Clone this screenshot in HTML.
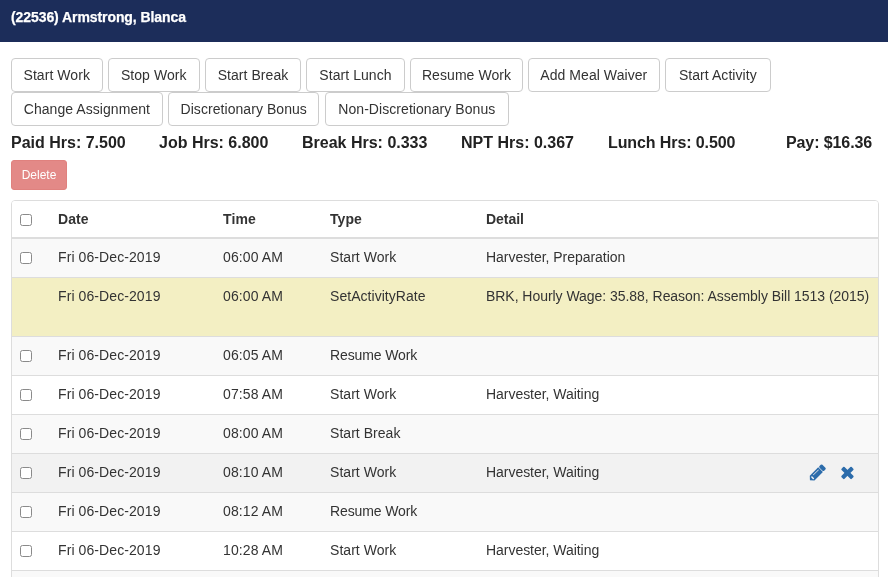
<!DOCTYPE html>
<html>
<head>
<meta charset="utf-8">
<title>Timecard</title>
<style>
*{box-sizing:border-box}
html,body{margin:0;padding:0}
body{width:888px;height:577px;overflow:hidden;background:#fff;font-family:"Liberation Sans",Arial,sans-serif;font-size:14px;line-height:20px;color:#333}
#wrap{position:absolute;left:0;top:0;width:888px;height:577px;overflow:hidden;will-change:transform;opacity:0.999}
.hdr{letter-spacing:-0.08px;-webkit-text-stroke:0.25px #fff;height:42px;background:#1c2d5a;color:#fff;font-weight:bold;font-size:14px;padding:7px 11px 0 11px;line-height:20px}
.btn{position:absolute;text-align:center;letter-spacing:0.06px;height:34px;border:1px solid #ccc;border-radius:4px;background:#fff;color:#333;font-size:14px;line-height:20px;padding:6px 0;white-space:nowrap}
.stats{position:absolute;left:11px;top:132px;width:861px;font-weight:bold;font-size:16px;line-height:22px;color:#222;white-space:nowrap}
.stats span{position:absolute;top:0}
.del{position:absolute;left:11px;top:160px;width:56px;height:30px;border-radius:3px;background:#e38987;border:1px solid #e0817e;color:#fff;font-size:12px;line-height:18px;padding:5px 0;text-align:center}
.tbl{position:absolute;left:11px;top:200px;width:868px;height:400px;border:1px solid #ddd;border-radius:4px;overflow:hidden}
.row{position:relative;height:39px;border-top:1px solid #ddd;background:#fff}
.row.odd{background:#f9f9f9}
.row.head{height:38px;border-top:0;border-bottom:2px solid #ddd;font-weight:bold;background:#fff}
.row.hl{height:59px;background:#f3efc3}
.row.hov{background:#f2f2f2}
.row.first{border-top:0;height:38px}
.row.first .cb{top:13px}
.row span{position:absolute;top:8px;white-space:nowrap}
.c1{left:46px;letter-spacing:0.09px}.c2{left:211px;letter-spacing:0.12px}.c3{left:318px;letter-spacing:0.04px}.c4{left:474px;letter-spacing:-0.04px}
.cb{position:absolute;left:8px;top:13px;width:12px;height:12px;border:1px solid #8a8a8a;border-radius:2.5px;background:#fff}
.ico{position:absolute;top:10px}
</style>
</head>
<body>
<div id="wrap">
<div class="hdr">(22536) Armstrong, Blanca</div>
<div class="btn" style="left:11px;top:58px;width:91.5px">Start Work</div>
<div class="btn" style="left:108px;top:58px;width:91.5px">Stop Work</div>
<div class="btn" style="left:205px;top:58px;width:96px">Start Break</div>
<div class="btn" style="left:306px;top:58px;width:99px">Start Lunch</div>
<div class="btn" style="left:410px;top:58px;width:113px">Resume Work</div>
<div class="btn" style="left:528px;top:58px;width:131.6px">Add Meal Waiver</div>
<div class="btn" style="left:665px;top:58px;width:105.7px">Start Activity</div>
<div class="btn" style="left:11px;top:92px;width:151.8px">Change Assignment</div>
<div class="btn" style="left:168px;top:92px;width:151.4px">Discretionary Bonus</div>
<div class="btn" style="left:325px;top:92px;width:183.6px">Non-Discretionary Bonus</div>
<div class="stats">
<span style="left:0">Paid Hrs: 7.500</span>
<span style="left:148px">Job Hrs: 6.800</span>
<span style="left:291px">Break Hrs: 0.333</span>
<span style="left:450px">NPT Hrs: 0.367</span>
<span style="left:597px;letter-spacing:-0.1px">Lunch Hrs: 0.500</span>
<span style="left:775px;letter-spacing:-0.1px">Pay: $16.36</span>
</div>
<div class="del">Delete</div>
<div class="tbl">
<div class="row head"><i class="cb"></i><span class="c1">Date</span><span class="c2">Time</span><span class="c3">Type</span><span class="c4">Detail</span></div>
<div class="row odd first"><i class="cb"></i><span class="c1">Fri 06-Dec-2019</span><span class="c2">06:00 AM</span><span class="c3">Start Work</span><span class="c4">Harvester, Preparation</span></div>
<div class="row hl"><span class="c1">Fri 06-Dec-2019</span><span class="c2">06:00 AM</span><span class="c3">SetActivityRate</span><span class="c4">BRK, Hourly Wage: 35.88, Reason: Assembly Bill 1513 (2015)</span></div>
<div class="row odd"><i class="cb"></i><span class="c1">Fri 06-Dec-2019</span><span class="c2">06:05 AM</span><span class="c3" style="letter-spacing:-0.12px">Resume Work</span></div>
<div class="row"><i class="cb"></i><span class="c1">Fri 06-Dec-2019</span><span class="c2">07:58 AM</span><span class="c3">Start Work</span><span class="c4">Harvester, Waiting</span></div>
<div class="row odd"><i class="cb"></i><span class="c1">Fri 06-Dec-2019</span><span class="c2">08:00 AM</span><span class="c3">Start Break</span></div>
<div class="row hov"><i class="cb"></i><span class="c1">Fri 06-Dec-2019</span><span class="c2">08:10 AM</span><span class="c3">Start Work</span><span class="c4">Harvester, Waiting</span>
<svg class="ico" style="left:796px;top:8px" width="20" height="20" viewBox="0 0 20 20"><g transform="translate(1.8,18.4) rotate(-45)" fill="#2c6cab"><path d="M0.2,0 L3.3,-3.3 L15.2,-3.3 L15.2,3.3 L3.3,3.3 Z"/><rect x="15.85" y="-3.3" width="4.1" height="6.6" rx="1.2"/><rect x="3.1" y="-1.6" width="1.5" height="3.4" rx="0.7" fill="#f2f2f2"/><rect x="6.2" y="-1.65" width="7.6" height="0.6" fill="#f2f2f2"/></g></svg>
<svg class="ico" style="left:827px;top:10px" width="16" height="16" viewBox="0 0 16 16"><g transform="translate(8.45,8.97)" fill="#2c6cab"><rect x="-7.2" y="-2.1" width="14.4" height="4.2" rx="1" transform="rotate(45)"/><rect x="-7.2" y="-2.1" width="14.4" height="4.2" rx="1" transform="rotate(-45)"/></g></svg>
</div>
<div class="row odd"><i class="cb"></i><span class="c1">Fri 06-Dec-2019</span><span class="c2">08:12 AM</span><span class="c3" style="letter-spacing:-0.12px">Resume Work</span></div>
<div class="row"><i class="cb"></i><span class="c1">Fri 06-Dec-2019</span><span class="c2">10:28 AM</span><span class="c3">Start Work</span><span class="c4">Harvester, Waiting</span></div>
<div class="row odd"></div>
</div>
</div>
</body>
</html>
